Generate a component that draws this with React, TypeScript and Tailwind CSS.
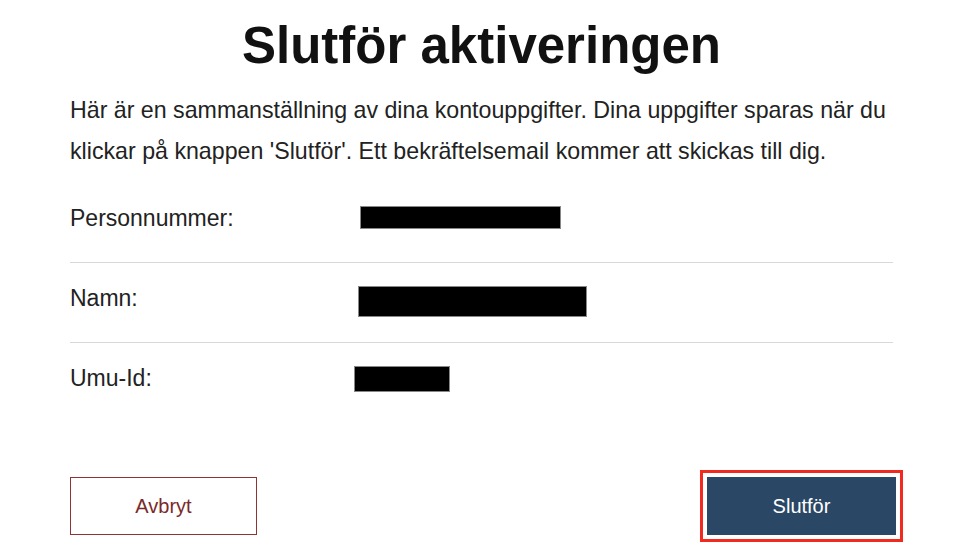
import React from "react";

interface SummaryRowProps {
    label: string;
    redactClass: string;
    last?: boolean;
}

const SummaryRow: React.FC<SummaryRowProps> = ({ label, redactClass, last }) => {
    return (
        <div className={`flex items-start h-[80px] pt-[22px] ${last ? "" : "border-b border-[#d8d8d8]"}`}>
            <div className="w-[284px] text-[23px] leading-[26px] text-[#222]">{label}</div>
            {/* redacted value */}
            <div className={`bg-black border border-[#888] ${redactClass}`} />
        </div>
    );
};

const App: React.FC = () => {
    return (
        <div className="w-[970px] h-[556px] bg-white overflow-hidden" style={{ fontFamily: '"Liberation Sans", Arial, sans-serif' }}>
            <div className="ml-[70px] w-[823px] flex flex-col">
                <h1 className="text-center text-[51px] font-bold leading-[60px] text-[#111] mt-[16px]">
                    Slutför aktiveringen
                </h1>

                <p className="mt-[14px] text-[23.2px] leading-[41px] text-[#222]">
                    Här är en sammanställning av dina kontouppgifter. Dina uppgifter sparas när du klickar på knappen 'Slutför'. Ett bekräftelsemail kommer att skickas till dig.
                </p>

                <div className="mt-[11px] flex flex-col">
                    <SummaryRow label="Personnummer:" redactClass="ml-[6px] mt-[1px] w-[201px] h-[23px]" />
                    <SummaryRow label="Namn:" redactClass="ml-[4px] mt-[1px] w-[229px] h-[31px]" />
                    <SummaryRow label="Umu-Id:" redactClass="ml-0 mt-[1px] w-[96px] h-[26px]" last />
                </div>

                <div className="mt-[54px] flex justify-between items-center mr-[-3px]">
                    <button className="w-[187px] h-[58px] border border-[#8e3434] text-[#7a2a2a] text-[20px] bg-white">
                        Avbryt
                    </button>
                    <button className="w-[189px] h-[58px] bg-[#2b4766] text-white text-[20px] outline-[3px] outline-solid outline-[#f2291e] outline-offset-[4px]">
                        Slutför
                    </button>
                </div>
            </div>
        </div>
    );
};

export default App;
